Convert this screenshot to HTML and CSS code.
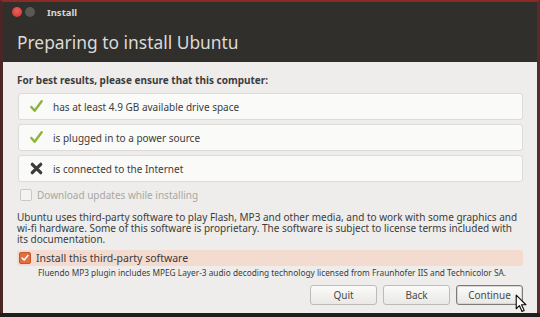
FILE: index.html
```html
<!DOCTYPE html>
<html lang="en">
  <head>
    <meta charset="UTF-8" />
    <title>Install</title>
    <link rel="stylesheet" href="styles.css">
  </head>
  <body>
    <div class="window">
      <header class="titlebar">
        <span class="dot close"></span>
        <span class="dot mini"></span>
        <span class="title">Install</span>
      </header>
      <div class="banner">
        <h1>Preparing to install Ubuntu</h1>
      </div>

      <main class="content">
        <p class="lead">For best results, please ensure that this computer:</p>

        <div class="checks">
          <div class="row">
            <svg class="ico" viewBox="0 0 16 16"><path d="M2.5 8.5 L6 12.5 L13.5 2.5" fill="none" stroke="#8db33b" stroke-width="2.6" stroke-linecap="round" stroke-linejoin="round"/></svg>
            <span>has at least 4.9 GB available drive space</span>
          </div>
          <div class="row">
            <svg class="ico" viewBox="0 0 16 16"><path d="M2.5 8.5 L6 12.5 L13.5 2.5" fill="none" stroke="#8db33b" stroke-width="2.6" stroke-linecap="round" stroke-linejoin="round"/></svg>
            <span>is plugged in to a power source</span>
          </div>
          <div class="row">
            <svg class="ico" viewBox="0 0 16 16"><path d="M3.5 3.5 L12.5 12.5 M12.5 3.5 L3.5 12.5" fill="none" stroke="#3a3a38" stroke-width="3.4" stroke-linecap="round"/></svg>
            <span>is connected to the Internet</span>
          </div>
        </div>

        <label class="opt disabled">
          <span class="box"></span>
          <span>Download updates while installing</span>
        </label>

        <p class="info">Ubuntu uses third-party software to play Flash, MP3 and other media, and to work with some graphics and wi-fi hardware. Some of this software is proprietary. The software is subject to license terms included with its documentation.</p>

        <div class="third">
          <label class="opt checked">
            <span class="box">
              <svg viewBox="0 0 12 12"><path d="M2.5 6 L5 8.5 L9.5 3" fill="none" stroke="#fff" stroke-width="1.8" stroke-linecap="round" stroke-linejoin="round"/></svg>
            </span>
            <span>Install this third-party software</span>
          </label>
          <p class="note">Fluendo MP3 plugin includes MPEG Layer-3 audio decoding technology licensed from Fraunhofer IIS and Technicolor SA.</p>
        </div>

        <div class="buttons">
          <button>Quit</button>
          <button>Back</button>
          <button class="default">Continue</button>
        </div>

        <!-- mouse pointer -->
        <svg class="cursor" viewBox="0 0 12 18"><path d="M1 1 L1 14 L4 11 L6.5 16.5 L8.5 15.5 L6 10.2 L10.2 10.2 Z" fill="#fff" stroke="#111" stroke-width="1.1" stroke-linejoin="round"/></svg>
      </main>
    </div>
  </body>
</html>
```

FILE: styles.css
```css
html, body {
  margin: 0;
  height: 100%;
}

body {
  background: #221c1c;
  font-family: "Noto Sans", "DejaVu Sans", sans-serif;
}

.window {
  height: 313px;
  display: flex;
  flex-direction: column;
  border-left: 3px solid #4a2626;
  border-right: 3px solid #5a2a2a;
  border-top: 2px solid #8a2b24;
  box-sizing: border-box;
  background: #302f2b;
}

.titlebar {
  height: 20px;
  display: flex;
  align-items: center;
  padding-left: 9px;
  gap: 3px;
}

.dot {
  width: 10px;
  height: 10px;
  border-radius: 50%;
}
.dot.close {
  background: radial-gradient(circle at 50% 40%, #f0605a, #c9332b);
}
.dot.mini {
  background: #5a5954;
}

.title {
  margin-left: 9px;
  color: #d9d7d2;
  font-size: 9.5px;
  font-weight: bold;
}

.banner {
  height: 40px;
  padding-left: 14px;
}

.banner h1 {
  margin: 0;
  padding-top: 8px;
  font-size: 17.4px;
  font-weight: normal;
  color: #dcdad5;
}

.content {
  flex: 1;
  position: relative;
  background: #eeedeb;
  padding: 11px 14px 0 14px;
  color: #3c3c3c;
  font-size: 10px;
}

.lead {
  margin: 0 0 6px 0;
  font-weight: bold;
}

.checks {
  display: flex;
  flex-direction: column;
  gap: 4px;
  padding-left: 1px;
}

.row {
  height: 25px;
  display: flex;
  align-items: center;
  background: #fafaf9;
  border: 1px solid #dcdbd8;
  border-radius: 3px;
  padding-left: 10px;
  gap: 9px;
}

.ico {
  width: 15px;
  height: 15px;
}

.opt {
  display: flex;
  align-items: center;
  gap: 5px;
}

.opt.disabled {
  margin-top: 6px;
  color: #a9a8a5;
  padding-left: 3px;
}

.box {
  width: 10px;
  height: 10px;
  border: 1px solid #c9c8c5;
  border-radius: 2px;
  background: #f4f3f1;
  display: flex;
}

.info {
  margin: 10px 0 0 0;
  line-height: 11px;
}

.third {
  margin-top: 5px;
}

.opt.checked {
  height: 16px;
  background: #f4dbd0;
  border-radius: 3px;
  padding-left: 2px;
  color: #3a3a3a;
  font-size: 10.5px;
}

.opt.checked .box {
  border-color: #c4562a;
  background: #e26f3d;
}

.note {
  margin: 1px 0 0 21px;
  font-size: 8.3px;
}

.buttons {
  display: flex;
  justify-content: flex-end;
  gap: 6px;
  margin-top: 7px;
}

.buttons button {
  width: 67px;
  height: 20px;
  font-family: inherit;
  font-size: 10px;
  color: #4a4a4a;
  background: linear-gradient(#fbfbfa, #e9e8e5);
  border: 1px solid #bdbbb7;
  border-radius: 3px;
}

.buttons .default {
  border-color: #7d7b77;
  box-shadow: inset 0 0 0 1px #d8d7d4;
}

.cursor {
  position: absolute;
  left: 512px;
  top: 232px;
  width: 13px;
  height: 19px;
}
```
